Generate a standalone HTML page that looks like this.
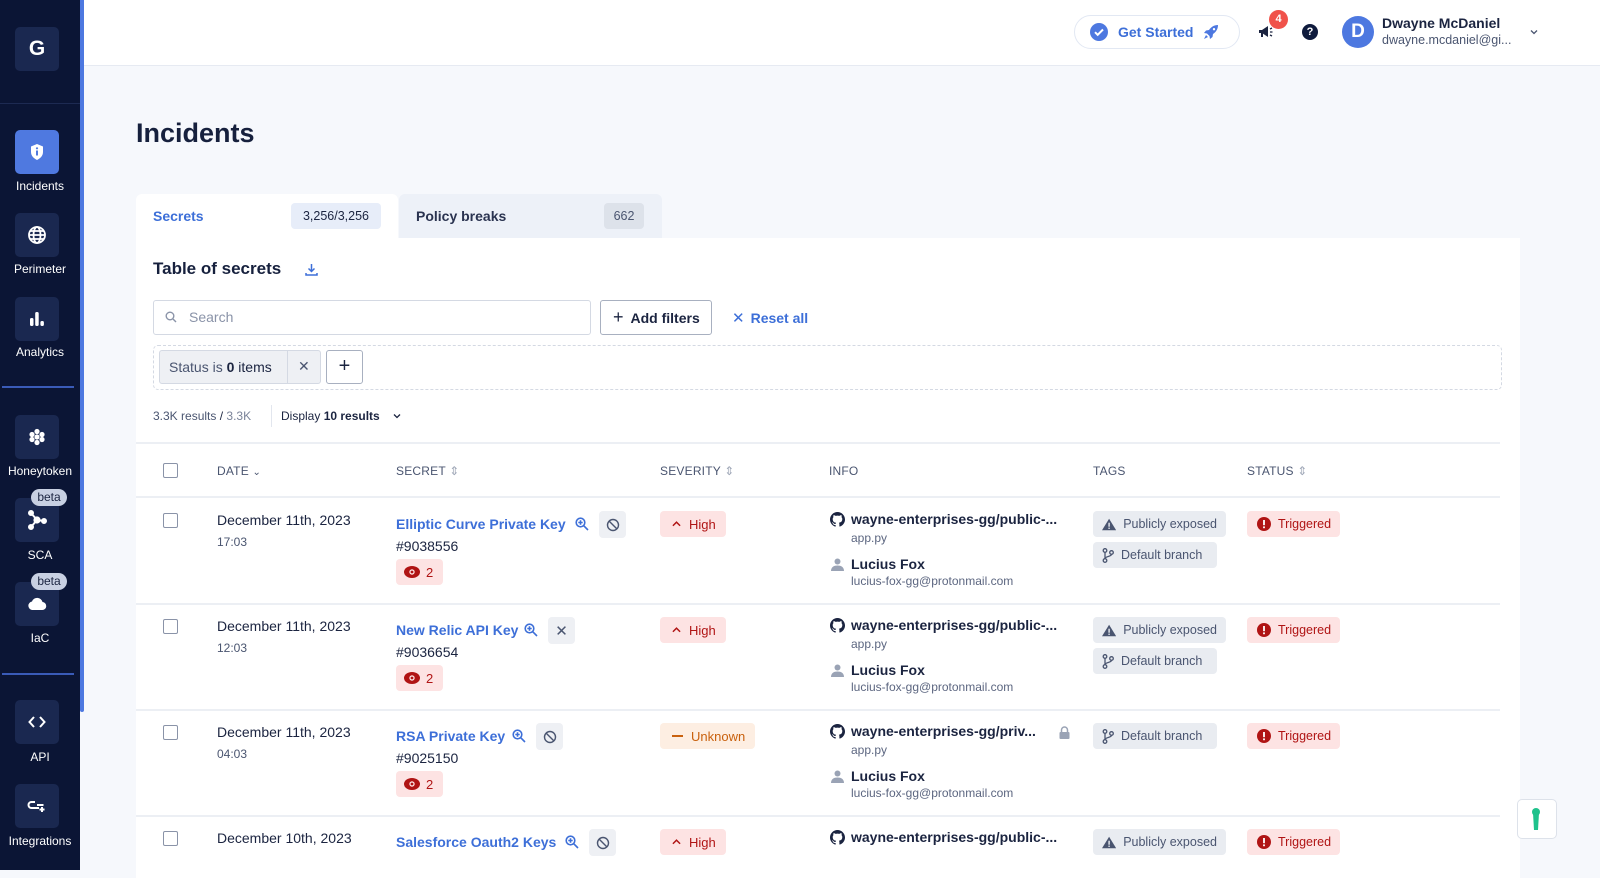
<!DOCTYPE html>
<html><head><meta charset="utf-8">
<style>
*{box-sizing:border-box;margin:0;padding:0}
body{width:1600px;height:870px;overflow:hidden;background:#f6f8fc;font-family:"Liberation Sans",sans-serif;color:#1b2440;position:relative}
.a{position:absolute}
#side{left:0;top:0;width:80px;height:870px;background:#0b1535}
#bar{left:80px;top:0;width:4px;height:712px;background:#4d78e0;border-radius:0 0 2px 2px}
.nb{position:absolute;left:15px;width:44px;height:44px;border-radius:5px;background:#1a2850;display:flex;align-items:center;justify-content:center}
.nl{position:absolute;left:0;width:80px;text-align:center;color:#fff;font-size:12px}
.div{position:absolute;left:2px;width:72px;height:2px;background:#3a5bb8}
.beta{position:absolute;left:31px;width:36px;height:17px;border-radius:9px;background:#c8d0e2;color:#1b2440;font-size:12px;text-align:center;line-height:17px}
#hdr{left:84px;top:0;width:1516px;height:66px;background:#fff;border-bottom:1px solid #e6eaf2}
.tab{position:absolute;top:194px;height:44px;border-radius:6px 6px 0 0;font-size:14px;font-weight:bold;display:flex;align-items:center}
.cnt{position:absolute;top:9px;height:26px;border-radius:4px;font-size:12.5px;font-weight:normal;line-height:26px;text-align:center}
#card{left:136px;top:238px;width:1384px;height:640px;background:#fff}
.th{position:absolute;top:464px;font-size:12px;color:#4a5570;letter-spacing:.2px}
.hl{position:absolute;left:136px;width:1364px;height:2px;background:#eceff4}
.cb{position:absolute;left:163px;width:15px;height:15px;border:1.5px solid #8a93a8;border-radius:2px;background:#fff}
.d1{position:absolute;left:217px;font-size:14px;color:#1b2440}
.d2{position:absolute;left:217px;font-size:12px;color:#4a5570}
.sn{position:absolute;left:396px;font-size:14px;color:#3d6fd8;font-weight:bold;white-space:nowrap}
.id{position:absolute;left:396px;font-size:14px;color:#1b2440}
.eye{position:absolute;left:396px;width:47px;height:26px;background:#fde3e3;border-radius:4px;color:#b01414;font-size:13px;display:flex;align-items:center;padding-left:8px;gap:6px}
.ib{position:absolute;width:27px;height:27px;background:#eef0f4;border-radius:4px;display:flex;align-items:center;justify-content:center}
.mg{position:absolute}
.sev{position:absolute;left:660px;height:26px;border-radius:4px;font-size:13px;display:flex;align-items:center;padding:0 10px 0 12px;gap:8px}
.repo{position:absolute;left:830px;font-size:14px;font-weight:bold;color:#1b2440;display:flex;align-items:center;gap:6px;white-space:nowrap}
.sub{position:absolute;left:851px;font-size:12px;color:#5c6680}
.usr{position:absolute;left:831px;font-size:14px;font-weight:bold;color:#1b2440;display:flex;align-items:center;gap:7px}
.tag{position:absolute;left:1093px;height:26px;border-radius:4px;background:#e9ecf1;color:#4a5570;font-size:12.5px;display:flex;align-items:center;padding:0 9px;gap:7px;white-space:nowrap}
.st{position:absolute;left:1247px;height:26px;border-radius:4px;background:#fde3e3;color:#b01414;font-size:12.5px;display:flex;align-items:center;padding:0 9px 0 10px;gap:7px}
</style></head><body>

<svg width="0" height="0" style="position:absolute">
<defs>
<symbol id="mag" viewBox="0 0 14 14"><g fill="none" stroke="#3d6fd8" stroke-width="1.6"><circle cx="5.5" cy="5.5" r="4.3"/><path d="M8.7 8.7L13 13M5.5 3.3v4.4M3.3 5.5h4.4"/></g></symbol>
<symbol id="chev" viewBox="0 0 10 6"><path d="M1 5l4-4 4 4" fill="none" stroke="#b01414" stroke-width="1.6"/></symbol>
</defs></svg>

<div id="side" class="a">
  <div class="nb" style="top:27px"><span style="color:#fff;font-size:21px;font-weight:bold">G</span></div>
  <div class="div" style="top:103px;background:#1d2a52;left:0;width:80px;height:1px"></div>
  <div class="nb" style="top:130px;background:#4f79e0"><svg width="16" height="18" viewBox="0 0 16 18"><path d="M8 1L14 3.5V9c0 4-3 6.5-6 8-3-1.5-6-4-6-8V3.5z" fill="#fff"/><rect x="7" y="7.5" width="2" height="5" fill="#4f79e0"/><circle cx="8" cy="5.3" r="1.1" fill="#4f79e0"/></svg></div>
  <div class="nl" style="top:179px">Incidents</div>
  <div class="nb" style="top:213px"><svg width="20" height="20" viewBox="0 0 20 20" fill="none" stroke="#fff" stroke-width="1.8"><circle cx="10" cy="10" r="8"/><ellipse cx="10" cy="10" rx="3.5" ry="8"/><path d="M2 10h16M3.5 6h13M3.5 14h13"/></svg></div>
  <div class="nl" style="top:262px">Perimeter</div>
  <div class="nb" style="top:297px"><svg width="16" height="16" viewBox="0 0 16 16" fill="#fff"><rect x="1" y="7" width="3.5" height="8" rx="1.5"/><rect x="6.2" y="1" width="3.5" height="14" rx="1.5"/><rect x="11.4" y="10" width="3.5" height="5" rx="1.5"/></svg></div>
  <div class="nl" style="top:345px">Analytics</div>
  <div class="div" style="top:386px"></div>
  <div class="nb" style="top:415px"><svg width="18" height="18" viewBox="0 0 18 18" fill="#fff"><circle cx="9" cy="3.5" r="2.6"/><circle cx="9" cy="14.5" r="2.6"/><circle cx="4" cy="6.5" r="2.6"/><circle cx="14" cy="6.5" r="2.6"/><circle cx="4" cy="11.5" r="2.6"/><circle cx="14" cy="11.5" r="2.6"/><circle cx="9" cy="9" r="2.6"/></svg></div>
  <div class="nl" style="top:464px">Honeytoken</div>
  <div class="nb" style="top:498px"><svg width="20" height="20" viewBox="0 0 20 20" fill="#fff" stroke="#fff" stroke-width="2"><path d="M4 3L10 10L17 11M10 10L4 17" fill="none"/><circle cx="4" cy="3" r="2"/><circle cx="10" cy="10" r="2.6"/><circle cx="17" cy="11" r="2"/><circle cx="4" cy="17" r="2"/></svg></div>
  <div class="beta" style="top:489px">beta</div>
  <div class="nl" style="top:548px">SCA</div>
  <div class="nb" style="top:582px"><svg width="20" height="14" viewBox="0 0 20 14"><path d="M5 13h10a4 4 0 0 0 .5-8A5.5 5.5 0 0 0 5 4.5 4.3 4.3 0 0 0 5 13z" fill="#fff"/></svg></div>
  <div class="beta" style="top:573px">beta</div>
  <div class="nl" style="top:631px">IaC</div>
  <div class="div" style="top:673px"></div>
  <div class="nb" style="top:700px"><svg width="18" height="12" viewBox="0 0 18 12" fill="none" stroke="#fff" stroke-width="2"><path d="M6 1L1.5 6L6 11M12 1l4.5 5L12 11"/></svg></div>
  <div class="nl" style="top:750px">API</div>
  <div class="nb" style="top:784px"><svg width="20" height="14" viewBox="0 0 20 14" fill="none" stroke="#fff" stroke-width="2"><path d="M8 3H4.5a3 3 0 0 0 0 6H12M10 6h5M13 6h3.5"/><path d="M15 8v5M12.5 10.5h5"/></svg></div>
  <div class="nl" style="top:834px">Integrations</div>
</div>
<div id="bar" class="a"></div>

<div id="hdr" class="a">
  <div class="a" style="left:990px;top:15px;width:166px;height:34px;border:1px solid #e2e8f3;border-radius:17px;display:flex;align-items:center;padding-left:15px;gap:10px;color:#3d6fd8;font-size:14px;font-weight:bold">
    <svg width="18" height="18" viewBox="0 0 18 18"><circle cx="9" cy="9" r="9" fill="#4d78e0"/><path d="M5 9.2l2.7 2.6L13 6.5" stroke="#fff" stroke-width="2" fill="none"/></svg>Get Started
    <svg width="16" height="16" viewBox="0 0 16 16" fill="#4d78e0"><path d="M15 1c-4 0-7 2-9 5L3 6.5 1 9l3 .5 2.5 2.5.5 3 2.5-2 .5-3c3-2 5-5 5-9zM11 4a1.2 1.2 0 1 1 0 2.4A1.2 1.2 0 0 1 11 4z"/><path d="M3 11l-2 4 4-2z"/></svg>
  </div>
  <svg class="a" style="left:1174px;top:25px" width="16" height="14" viewBox="0 0 16 14" fill="#1b2440"><path d="M1 5h3l6-4v11L4 8H1z"/><rect x="3" y="8" width="2" height="4"/><path d="M12 4l2-1M12 7h2.5M12 10l2 1" stroke="#1b2440" stroke-width="1.3"/></svg>
  <div class="a" style="left:1185px;top:10px;width:19px;height:19px;border-radius:50%;background:#f0524a;color:#fff;font-size:11px;font-weight:bold;text-align:center;line-height:19px">4</div>
  <div class="a" style="left:1218px;top:24px;width:16px;height:16px;border-radius:50%;background:#0f1b3d;color:#fff;font-size:11px;font-weight:bold;text-align:center;line-height:16px">?</div>
  <div class="a" style="left:1258px;top:16px;width:32px;height:32px;border-radius:50%;background:#4d78e0;color:#fff;font-size:19px;font-weight:bold;text-align:center;line-height:32px">D</div>
  <div class="a" style="left:1298px;top:15px;font-size:14px;font-weight:bold;color:#1b2440">Dwayne McDaniel</div>
  <div class="a" style="left:1298px;top:33px;font-size:12.5px;color:#4a5570">dwayne.mcdaniel@gi...</div>
  <svg class="a" style="left:1446px;top:29px" width="8" height="6" viewBox="0 0 8 6" fill="none" stroke="#4a5570" stroke-width="1.3"><path d="M1 1.5l3 3 3-3"/></svg>
</div>

<div class="a" style="left:136px;top:118px;font-size:27px;font-weight:bold;color:#16203d">Incidents</div>

<div class="tab" style="left:136px;width:262px;background:#fff;color:#3d6fd8;padding-left:17px">Secrets<div class="cnt" style="left:155px;width:90px;background:#e7edf9;color:#1b2440">3,256/3,256</div></div>
<div class="tab" style="left:399px;width:263px;background:#edf1f8;color:#2a3350;padding-left:17px">Policy breaks<div class="cnt" style="left:205px;width:40px;background:#dde2ea;color:#4a5570">662</div></div>

<div id="card" class="a"></div>
<div class="a" style="left:153px;top:259px;font-size:17px;font-weight:bold;color:#16203d">Table of secrets</div>
<svg class="a" style="left:305px;top:263px" width="13" height="13" viewBox="0 0 13 13" fill="none" stroke="#3d6fd8" stroke-width="1.5"><path d="M6.5 1v7M3.5 5.5l3 3 3-3M1 10v2h11v-2"/></svg>

<div class="a" style="left:153px;top:300px;width:438px;height:35px;border:1px solid #d4d9e3;border-radius:3px"></div>
<svg class="a" style="left:165px;top:311px" width="12" height="12" viewBox="0 0 12 12" fill="none" stroke="#8a93a8" stroke-width="1.4"><circle cx="5" cy="5" r="3.8"/><path d="M8 8l3 3"/></svg>
<div class="a" style="left:189px;top:309px;font-size:14px;color:#8a93a8">Search</div>
<div class="a" style="left:600px;top:300px;width:112px;height:35px;border:1px solid #a8b0c0;border-radius:3px;display:flex;align-items:center;padding-left:12px;gap:7px;font-size:14px;font-weight:bold;color:#1b2440"><span style="font-size:18px;font-weight:normal">+</span>Add filters</div>
<div class="a" style="left:732px;top:309px;font-size:14px;font-weight:bold;color:#3d6fd8"><span style="font-weight:normal;font-size:15px;margin-right:6px">✕</span>Reset all</div>

<div class="a" style="left:153px;top:345px;width:1349px;height:45px;border:1px dashed #d4d9e3;border-radius:5px"></div>
<div class="a" style="left:159px;top:350px;width:162px;height:34px;border:1px solid #d4d9e3;border-radius:3px;background:#eef0f4"></div>
<div class="a" style="left:287px;top:350px;width:1px;height:34px;background:#d4d9e3"></div>
<div class="a" style="left:169px;top:359px;font-size:14px;color:#4a5570">Status is <b style="color:#1b2440">0</b> <span style="color:#1b2440">items</span></div>
<div class="a" style="left:298px;top:358px;font-size:14px;color:#4a5570">✕</div>
<div class="a" style="left:326px;top:350px;width:37px;height:34px;border:1px solid #a8b0c0;border-radius:3px;text-align:center;line-height:31px;font-size:20px;color:#1b2440">+</div>

<div class="a" style="left:153px;top:409px;font-size:12px;color:#4a5570;white-space:nowrap">3.3K results <span style="color:#1b2440">/</span> <span style="color:#7a8399">3.3K</span></div>
<div class="a" style="left:271px;top:405px;width:1px;height:22px;background:#e2e6ee"></div>
<div class="a" style="left:281px;top:409px;font-size:12px;color:#1b2440;white-space:nowrap">Display <b>10 results</b></div>
<svg class="a" style="left:393px;top:413px" width="8" height="6" viewBox="0 0 8 6" fill="none" stroke="#1b2440" stroke-width="1.3"><path d="M1 1.5l3 3 3-3"/></svg>

<div class="hl" style="top:442px"></div>
<div class="cb" style="top:463px"></div>
<div class="th" style="left:217px">DATE <span style="font-size:10px">⌄</span></div>
<div class="th" style="left:396px">SECRET <span style="color:#a0a8b8">⇕</span></div>
<div class="th" style="left:660px">SEVERITY <span style="color:#a0a8b8">⇕</span></div>
<div class="th" style="left:829px">INFO</div>
<div class="th" style="left:1093px">TAGS</div>
<div class="th" style="left:1247px">STATUS <span style="color:#a0a8b8">⇕</span></div>

<div class="hl" style="top:496px"></div>
<div class="hl" style="top:603px"></div>
<div class="hl" style="top:709px"></div>
<div class="hl" style="top:815px"></div>

<!-- row 1 -->
<div class="cb" style="top:513px"></div>
<div class="d1" style="top:512px">December 11th, 2023</div>
<div class="d2" style="top:535px">17:03</div>
<div class="sn" style="top:516px">Elliptic Curve Private Key</div>
<svg class="mg" style="left:575px;top:517px" width="14" height="14"><use href="#mag"/></svg>
<div class="ib" style="left:599px;top:511px"><svg width="14" height="14" viewBox="0 0 14 14" fill="none" stroke="#4a5570" stroke-width="1.4"><circle cx="7" cy="7" r="5.5"/><path d="M3 3l8 8"/></svg></div>
<div class="id" style="top:538px">#9038556</div>
<div class="eye" style="top:559px"><svg width="16" height="12" viewBox="0 0 16 12"><ellipse cx="8" cy="6" rx="8" ry="6" fill="#b01414"/><circle cx="8" cy="6" r="2.7" fill="#fde3e3"/><circle cx="8" cy="6" r="1.4" fill="#b01414"/></svg>2</div>
<div class="sev" style="top:511px;background:#fde3e3;color:#b01414"><svg width="9" height="6"><use href="#chev"/></svg>High</div>
<div class="repo" style="top:511px"><svg width="15" height="15" viewBox="0 0 16 16"><path fill="#1b2440" d="M8 0C3.6 0 0 3.6 0 8c0 3.5 2.3 6.5 5.5 7.6.4.1.5-.2.5-.4v-1.4c-2.2.5-2.7-1-2.7-1-.4-.9-.9-1.2-.9-1.2-.7-.5.1-.5.1-.5.8.1 1.2.8 1.2.8.7 1.2 1.9.9 2.3.7.1-.5.3-.9.5-1.1-1.8-.2-3.6-.9-3.600-4 0-.9.3-1.6.8-2.1-.1-.2-.4-1 .1-2.1 0 0 .7-.2 2.2.8.6-.2 1.3-.3 2-.3s1.4.1 2 .3c1.5-1 2.2-.8 2.2-.8.4 1.1.2 1.9.1 2.1.5.6.8 1.3.8 2.1 0 3.1-1.9 3.7-3.6 3.9.3.3.5.8.5 1.5v2.2c0 .2.1.5.6.4C13.7 14.5 16 11.5 16 8c0-4.4-3.6-8-8-8z"/></svg>wayne-enterprises-gg/public-...</div>
<div class="sub" style="top:531px">app.py</div>
<div class="usr" style="top:556px"><svg width="13" height="13" viewBox="0 0 13 13" fill="#9aa3b5"><circle cx="6.5" cy="3.5" r="3"/><path d="M0 13c0-4 3-5.5 6.5-5.5S13 9 13 13z"/></svg>Lucius Fox</div>
<div class="sub" style="top:574px">lucius-fox-gg@protonmail.com</div>
<div class="tag" style="top:511px;width:133px"><svg width="16" height="13" viewBox="0 0 16 13"><path d="M8 0l8 13H0z" fill="#4a5570"/><rect x="7.2" y="4.5" width="1.6" height="4.5" fill="#e9ecf1"/><rect x="7.2" y="10" width="1.6" height="1.5" fill="#e9ecf1"/></svg>Publicly exposed</div>
<div class="tag" style="top:542px;width:124px"><svg width="12" height="15" viewBox="0 0 12 15" fill="none" stroke="#4a5570" stroke-width="1.3"><circle cx="3" cy="2.5" r="1.8"/><circle cx="3" cy="12.5" r="1.8"/><circle cx="9.5" cy="4.5" r="1.8"/><path d="M3 4.3v6.4M9.5 6.3c0 2.5-6.5 2-6.5 4.4"/></svg>Default branch</div>
<div class="st" style="top:511px"><svg width="14" height="14" viewBox="0 0 14 14"><circle cx="7" cy="7" r="7" fill="#b01414"/><rect x="6.1" y="3" width="1.8" height="5.2" fill="#fff"/><rect x="6.1" y="9.4" width="1.8" height="1.8" fill="#fff"/></svg>Triggered</div>

<!-- row 2 -->
<div class="cb" style="top:619px"></div>
<div class="d1" style="top:618px">December 11th, 2023</div>
<div class="d2" style="top:641px">12:03</div>
<div class="sn" style="top:622px">New Relic API Key</div>
<svg class="mg" style="left:524px;top:623px" width="14" height="14"><use href="#mag"/></svg>
<div class="ib" style="left:548px;top:617px;color:#4a5570;font-size:15px">✕</div>
<div class="id" style="top:644px">#9036654</div>
<div class="eye" style="top:665px"><svg width="16" height="12" viewBox="0 0 16 12"><ellipse cx="8" cy="6" rx="8" ry="6" fill="#b01414"/><circle cx="8" cy="6" r="2.7" fill="#fde3e3"/><circle cx="8" cy="6" r="1.4" fill="#b01414"/></svg>2</div>
<div class="sev" style="top:617px;background:#fde3e3;color:#b01414"><svg width="9" height="6"><use href="#chev"/></svg>High</div>
<div class="repo" style="top:617px"><svg width="15" height="15" viewBox="0 0 16 16"><path fill="#1b2440" d="M8 0C3.6 0 0 3.6 0 8c0 3.5 2.3 6.5 5.5 7.6.4.1.5-.2.5-.4v-1.4c-2.2.5-2.7-1-2.7-1-.4-.9-.9-1.2-.9-1.2-.7-.5.1-.5.1-.5.8.1 1.2.8 1.2.8.7 1.2 1.9.9 2.3.7.1-.5.3-.9.5-1.1-1.8-.2-3.6-.9-3.6-4 0-.9.3-1.6.8-2.1-.1-.2-.4-1 .1-2.1 0 0 .7-.2 2.2.8.6-.2 1.3-.3 2-.3s1.4.1 2 .3c1.5-1 2.2-.8 2.2-.8.4 1.1.2 1.9.1 2.1.5.6.8 1.3.8 2.1 0 3.1-1.9 3.7-3.6 3.9.3.3.5.8.5 1.5v2.2c0 .2.1.5.6.4C13.7 14.5 16 11.5 16 8c0-4.4-3.6-8-8-8z"/></svg>wayne-enterprises-gg/public-...</div>
<div class="sub" style="top:637px">app.py</div>
<div class="usr" style="top:662px"><svg width="13" height="13" viewBox="0 0 13 13" fill="#9aa3b5"><circle cx="6.5" cy="3.5" r="3"/><path d="M0 13c0-4 3-5.5 6.5-5.5S13 9 13 13z"/></svg>Lucius Fox</div>
<div class="sub" style="top:680px">lucius-fox-gg@protonmail.com</div>
<div class="tag" style="top:617px;width:133px"><svg width="16" height="13" viewBox="0 0 16 13"><path d="M8 0l8 13H0z" fill="#4a5570"/><rect x="7.2" y="4.5" width="1.6" height="4.5" fill="#e9ecf1"/><rect x="7.2" y="10" width="1.6" height="1.5" fill="#e9ecf1"/></svg>Publicly exposed</div>
<div class="tag" style="top:648px;width:124px"><svg width="12" height="15" viewBox="0 0 12 15" fill="none" stroke="#4a5570" stroke-width="1.3"><circle cx="3" cy="2.5" r="1.8"/><circle cx="3" cy="12.5" r="1.8"/><circle cx="9.5" cy="4.5" r="1.8"/><path d="M3 4.3v6.4M9.5 6.3c0 2.5-6.5 2-6.5 4.4"/></svg>Default branch</div>
<div class="st" style="top:617px"><svg width="14" height="14" viewBox="0 0 14 14"><circle cx="7" cy="7" r="7" fill="#b01414"/><rect x="6.1" y="3" width="1.8" height="5.2" fill="#fff"/><rect x="6.1" y="9.4" width="1.8" height="1.8" fill="#fff"/></svg>Triggered</div>

<!-- row 3 -->
<div class="cb" style="top:725px"></div>
<div class="d1" style="top:724px">December 11th, 2023</div>
<div class="d2" style="top:747px">04:03</div>
<div class="sn" style="top:728px">RSA Private Key</div>
<svg class="mg" style="left:512px;top:729px" width="14" height="14"><use href="#mag"/></svg>
<div class="ib" style="left:536px;top:723px"><svg width="14" height="14" viewBox="0 0 14 14" fill="none" stroke="#4a5570" stroke-width="1.4"><circle cx="7" cy="7" r="5.5"/><path d="M3 3l8 8"/></svg></div>
<div class="id" style="top:750px">#9025150</div>
<div class="eye" style="top:771px"><svg width="16" height="12" viewBox="0 0 16 12"><ellipse cx="8" cy="6" rx="8" ry="6" fill="#b01414"/><circle cx="8" cy="6" r="2.7" fill="#fde3e3"/><circle cx="8" cy="6" r="1.4" fill="#b01414"/></svg>2</div>
<div class="sev" style="top:723px;background:#fdeee2;color:#c9610e"><span style="display:inline-block;width:11px;height:2px;background:#c9610e"></span>Unknown</div>
<div class="repo" style="top:723px"><svg width="15" height="15" viewBox="0 0 16 16"><path fill="#1b2440" d="M8 0C3.6 0 0 3.6 0 8c0 3.5 2.3 6.5 5.5 7.6.4.1.5-.2.5-.4v-1.4c-2.2.5-2.7-1-2.7-1-.4-.9-.9-1.2-.9-1.2-.7-.5.1-.5.1-.5.8.1 1.2.8 1.2.8.7 1.2 1.9.9 2.3.7.1-.5.3-.9.5-1.1-1.8-.2-3.6-.9-3.6-4 0-.9.3-1.6.8-2.1-.1-.2-.4-1 .1-2.1 0 0 .7-.2 2.2.8.6-.2 1.3-.3 2-.3s1.4.1 2 .3c1.5-1 2.2-.8 2.2-.8.4 1.1.2 1.9.1 2.1.5.6.8 1.3.8 2.1 0 3.1-1.9 3.7-3.6 3.9.3.3.5.8.5 1.5v2.2c0 .2.1.5.6.4C13.7 14.5 16 11.5 16 8c0-4.4-3.6-8-8-8z"/></svg>wayne-enterprises-gg/priv...</div>
<svg class="a" style="left:1059px;top:726px" width="11" height="13" viewBox="0 0 11 13"><path d="M2.5 6V4a3 3 0 0 1 6 0v2" fill="none" stroke="#9aa3b5" stroke-width="1.5"/><rect x="0.5" y="6" width="10" height="7" rx="1" fill="#9aa3b5"/></svg>
<div class="sub" style="top:743px">app.py</div>
<div class="usr" style="top:768px"><svg width="13" height="13" viewBox="0 0 13 13" fill="#9aa3b5"><circle cx="6.5" cy="3.5" r="3"/><path d="M0 13c0-4 3-5.5 6.5-5.5S13 9 13 13z"/></svg>Lucius Fox</div>
<div class="sub" style="top:786px">lucius-fox-gg@protonmail.com</div>
<div class="tag" style="top:723px;width:124px"><svg width="12" height="15" viewBox="0 0 12 15" fill="none" stroke="#4a5570" stroke-width="1.3"><circle cx="3" cy="2.5" r="1.8"/><circle cx="3" cy="12.5" r="1.8"/><circle cx="9.5" cy="4.5" r="1.8"/><path d="M3 4.3v6.4M9.5 6.3c0 2.5-6.5 2-6.5 4.4"/></svg>Default branch</div>
<div class="st" style="top:723px"><svg width="14" height="14" viewBox="0 0 14 14"><circle cx="7" cy="7" r="7" fill="#b01414"/><rect x="6.1" y="3" width="1.8" height="5.2" fill="#fff"/><rect x="6.1" y="9.4" width="1.8" height="1.8" fill="#fff"/></svg>Triggered</div>

<!-- row 4 -->
<div class="cb" style="top:831px"></div>
<div class="d1" style="top:830px">December 10th, 2023</div>
<div class="sn" style="top:834px">Salesforce Oauth2 Keys</div>
<svg class="mg" style="left:565px;top:835px" width="14" height="14"><use href="#mag"/></svg>
<div class="ib" style="left:589px;top:829px"><svg width="14" height="14" viewBox="0 0 14 14" fill="none" stroke="#4a5570" stroke-width="1.4"><circle cx="7" cy="7" r="5.5"/><path d="M3 3l8 8"/></svg></div>
<div class="sev" style="top:829px;background:#fde3e3;color:#b01414"><svg width="9" height="6"><use href="#chev"/></svg>High</div>
<div class="repo" style="top:829px"><svg width="15" height="15" viewBox="0 0 16 16"><path fill="#1b2440" d="M8 0C3.6 0 0 3.6 0 8c0 3.5 2.3 6.5 5.5 7.6.4.1.5-.2.5-.4v-1.4c-2.2.5-2.7-1-2.7-1-.4-.9-.9-1.2-.9-1.2-.7-.5.1-.5.1-.5.8.1 1.2.8 1.2.8.7 1.2 1.9.9 2.3.7.1-.5.3-.9.5-1.1-1.8-.2-3.6-.9-3.6-4 0-.9.3-1.6.8-2.1-.1-.2-.4-1 .1-2.1 0 0 .7-.2 2.2.8.6-.2 1.3-.3 2-.3s1.4.1 2 .3c1.5-1 2.2-.8 2.2-.8.4 1.1.2 1.9.1 2.1.5.6.8 1.3.8 2.1 0 3.1-1.9 3.7-3.6 3.9.3.3.5.8.5 1.5v2.2c0 .2.1.5.6.4C13.7 14.5 16 11.5 16 8c0-4.4-3.6-8-8-8z"/></svg>wayne-enterprises-gg/public-...</div>
<div class="tag" style="top:829px;width:133px"><svg width="16" height="13" viewBox="0 0 16 13"><path d="M8 0l8 13H0z" fill="#4a5570"/><rect x="7.2" y="4.5" width="1.6" height="4.5" fill="#e9ecf1"/><rect x="7.2" y="10" width="1.6" height="1.5" fill="#e9ecf1"/></svg>Publicly exposed</div>
<div class="st" style="top:829px"><svg width="14" height="14" viewBox="0 0 14 14"><circle cx="7" cy="7" r="7" fill="#b01414"/><rect x="6.1" y="3" width="1.8" height="5.2" fill="#fff"/><rect x="6.1" y="9.4" width="1.8" height="1.8" fill="#fff"/></svg>Triggered</div>

<div class="a" style="left:1517px;top:799px;width:40px;height:40px;border:1px solid #dde2ea;border-radius:5px;background:#fff"></div>
<svg class="a" style="left:1530px;top:808px" width="12" height="22" viewBox="0 0 12 22"><circle cx="6" cy="4" r="4" fill="#1fc28c"/><path d="M3 5h6l-1 17H4z" fill="#1fc28c"/></svg>
</body></html>
